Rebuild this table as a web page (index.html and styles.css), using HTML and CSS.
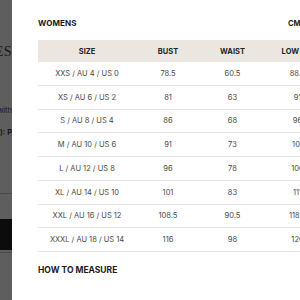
FILE: index.html
```html
<!DOCTYPE html>
<html>
<head>
<meta charset="utf-8">
<link rel="stylesheet" href="styles.css">
</head>
<body>
<div class="screen">
  <aside class="backdrop">
    <div class="bd-title">SIZE GUIDES</div>
    <div class="bd-line bd-with">Made with</div>
    <div class="bd-line bd-p">SIZE): P</div>
    <div class="bd-rule r1"></div>
    <div class="bd-button"></div>
    <div class="bd-rule r2"></div>
  </aside>
  <main class="panel">
    <div class="panel-head">
      <h2 class="title">WOMENS</h2>
      <div class="units"><span class="unit active">CM</span><span class="unit">INCHES</span></div>
    </div>
    <div class="table">
      <div class="row head"><span>SIZE</span><span>BUST</span><span>WAIST</span><span>LOW HIP</span></div>
      <div class="row"><span>XXS / AU 4 / US 0</span><span>78.5</span><span>60.5</span><span>88.5</span></div>
      <div class="row"><span>XS / AU 6 / US 2</span><span>81</span><span>63</span><span>91</span></div>
      <div class="row"><span>S / AU 8 / US 4</span><span>86</span><span>68</span><span>96</span></div>
      <div class="row"><span>M / AU 10 / US 6</span><span>91</span><span>73</span><span>101</span></div>
      <div class="row"><span>L / AU 12 / US 8</span><span>96</span><span>78</span><span>106</span></div>
      <div class="row"><span>XL / AU 14 / US 10</span><span>101</span><span>83</span><span>111</span></div>
      <div class="row"><span>XXL / AU 16 / US 12</span><span>108.5</span><span>90.5</span><span>118.5</span></div>
      <div class="row"><span>XXXL / AU 18 / US 14</span><span>116</span><span>98</span><span>126</span></div>
    </div>
    <h3 class="measure">HOW TO MEASURE</h3>
  </main>
</div>
</body>
</html>
```
FILE: styles.css
```css
html, body {
  margin: 0;
  padding: 0;
  width: 300px;
  height: 300px;
  overflow: hidden;
  background: #ffffff;
}
.screen {
  display: flex;
  width: 300px;
  height: 300px;
  overflow: hidden;
}
.backdrop {
  flex: 0 0 12px;
  width: 12px;
  background: #5e5e5e;
  overflow: hidden;
  display: flex;
  flex-direction: column;
  align-items: flex-end;
  color: #161616;
}
.bd-title {
  font-family: "Liberation Serif", serif;
  font-size: 14px;
  letter-spacing: 0.5px;
  white-space: nowrap;
  margin-top: 44px;
  line-height: 16px;
}
.bd-line {
  font-family: "Inter", sans-serif;
  font-size: 7.5px;
  white-space: nowrap;
  line-height: 10px;
}
.bd-with { margin-top: 46px; margin-right: 0; }
.bd-p { margin-top: 12px; font-weight: 700; }
.bd-rule {
  width: 12px;
  height: 1px;
  background: #4a4a4a;
}
.r1 { margin-top: 55px; }
.bd-button {
  width: 12px;
  height: 31px;
  margin-top: 25px;
  background: #0c0c0c;
}
.r2 { margin-top: 2px; }

.panel {
  flex: 0 0 auto;
  width: 330px;
  padding: 17px 0 0 26px;
  box-sizing: border-box;
  font-family: "Inter", sans-serif;
  color: #222;
}
.panel-head {
  display: flex;
  justify-content: space-between;
  align-items: center;
  width: 292px;
  height: 12px;
}
.title {
  margin: 0;
  font-size: 8px;
  font-weight: 700;
  color: #1c1c1c;
  letter-spacing: 0.1px;
}
.units {
  display: flex;
  gap: 6px;
  width: 42px;
  font-size: 7.5px;
  font-weight: 700;
}
.unit { color: #1c1c1c; }
.table {
  margin-top: 11px;
  width: 300px;
}
.row {
  display: grid;
  grid-template-columns: 98px 64px 65px 65px;
  height: 23.75px;
  box-sizing: border-box;
  border-bottom: 1px solid #e4e4e4;
  align-items: center;
  font-size: 7.5px;
  color: #484848;
}
.row span {
  text-align: center;
  white-space: nowrap;
}
.row.head {
  height: 22px;
  background: #ebe6df;
  border-bottom: none;
  font-weight: 700;
  color: #262626;
}
.measure {
  margin: 13px 0 0;
  font-size: 8.5px;
  font-weight: 700;
  color: #1c1c1c;
}
```
